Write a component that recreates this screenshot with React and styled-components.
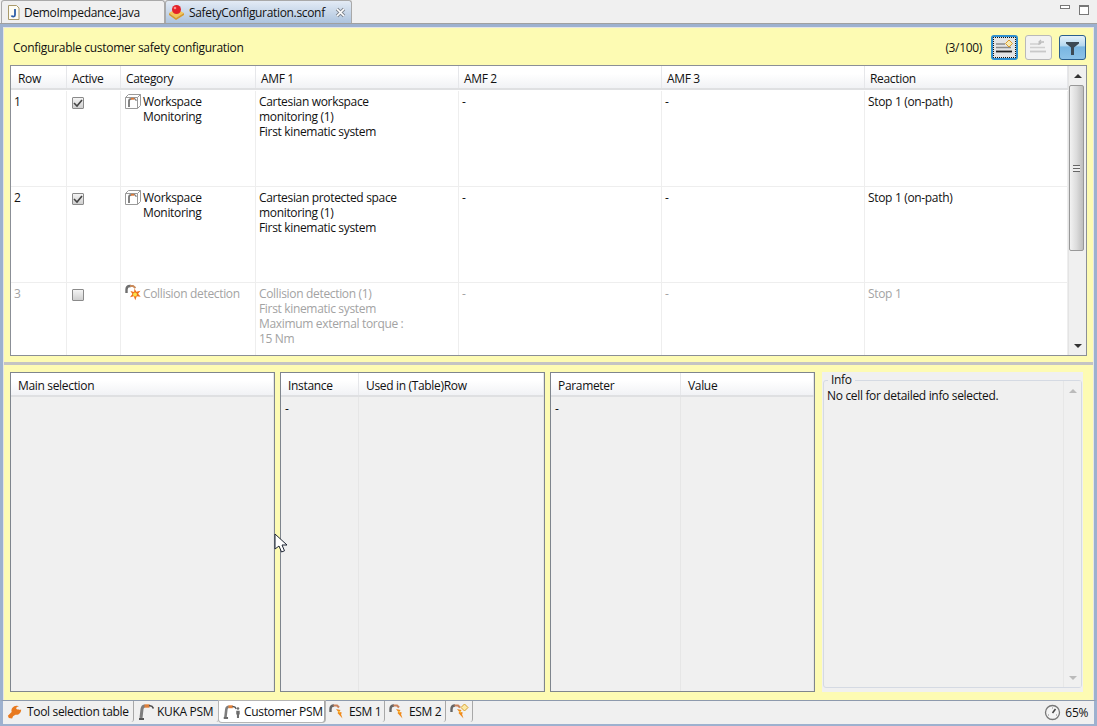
import React from "react";
import styled, { createGlobalStyle } from "styled-components";

const GlobalStyle = createGlobalStyle`
  html, body {
    margin: 0;
    padding: 0;
    background: #f0f0f0;
  }
  * {
    box-sizing: border-box;
  }
`;

const Page = styled.div`
  position: relative;
  width: 1097px;
  height: 726px;
  overflow: hidden;
  display: flex;
  flex-direction: column;
  font-family: "Open Sans", "Noto Sans", sans-serif;
  font-size: 12px;
  letter-spacing: -0.33px;
  color: #111;
  background: #f0f0f0;
`;

const EditorTabs = styled.div`
  height: 24px;
  flex: none;
  display: flex;
  padding-left: 1px;
  background: #f0f0f0;
  border-bottom: 1px solid #a0a0a0;
`;

const EditorTab = styled.div`
  width: ${({ width }) => width}px;
  height: 23px;
  display: flex;
  align-items: center;
  gap: ${({ $active }) => ($active ? 4 : 4)}px;
  padding: 1px 0 0 ${({ $active }) => ($active ? 2 : 5)}px;
  border: 1px solid #a9a9a9;
  border-bottom: none;
  border-radius: 3px 3px 0 0;
  background: ${({ $active }) =>
    $active ? "linear-gradient(#e3ebf5, #aec4de)" : "#f0f0f0"};
  span {
    flex: none;
  }
`;

const CloseMark = styled.svg`
  margin-left: 6px;
  flex: none;
`;

const WindowControls = styled.div`
  margin-left: auto;
  display: flex;
  align-items: flex-start;
  gap: 9px;
  padding: 5px 8px 0 0;
`;

const MinButton = styled.div`
  width: 10px;
  height: 4px;
  border: 1px solid #777;
  background: #fff;
`;

const MaxButton = styled.div`
  width: 10px;
  height: 10px;
  border: 1px solid #777;
  border-top-width: 2px;
  background: #fff;
`;

const Frame = styled.div`
  flex: 1;
  min-height: 0;
  display: flex;
  flex-direction: column;
  border-left: 3px solid #9db1cf;
  border-right: 3px solid #9db1cf;
  border-top: 3px solid #9db1cf;
  background: #fdfbb3;
  box-shadow: inset 1px 0 #e6e6e6, inset -1px 0 #e6e6e6, inset 0 1px #e6e6e6;
`;

const UpperPane = styled.div`
  height: 335px;
  flex: none;
  padding: 0 7px 6px 7px;
  display: flex;
  flex-direction: column;
`;

const HeaderRow = styled.div`
  height: 38px;
  flex: none;
  display: flex;
  align-items: center;
  padding: 2px 1px 0 0;
`;

const HeaderTitle = styled.div`
  padding-left: 3px;
  flex: 1;
  letter-spacing: -0.28px;
`;

const Counter = styled.div`
  margin-right: 2px;
`;

const ToolButton = styled.div`
  width: 27px;
  height: 25px;
  margin-left: 7px;
  display: flex;
  align-items: center;
  justify-content: center;
  border-radius: 3px;
  border: ${({ $kind }) =>
    $kind === "focus"
      ? "2px solid #2f8fd0"
      : $kind === "on"
      ? "1px solid #2b5f8f"
      : "1px solid #b9b9b9"};
  background: ${({ $kind }) =>
    $kind === "on"
      ? "linear-gradient(#e4f1fa 0%, #b5d8ef 42%, #79b6e2 48%, #8cc2e8 100%)"
      : $kind === "focus"
      ? "#e4e4e4"
      : "#f2f2f2"};
  outline: ${({ $kind }) => ($kind === "focus" ? "1px dotted #111" : "none")};
  outline-offset: -3px;
`;

const TableBox = styled.div`
  flex: 1;
  min-height: 0;
  display: flex;
  background: #fff;
  border: 1px solid #8b8f96;
`;

const TableBody = styled.div`
  flex: 1;
  min-width: 0;
  overflow: hidden;
`;

const tableColumns = "56px 54px 135px 203px 203px 203px 203px";

const HeadRow = styled.div`
  display: grid;
  grid-template-columns: ${({ $columns }) => $columns};
  height: 24px;
  flex: none;
  border-bottom: 2px solid #dfe0e2;
  background: linear-gradient(#ffffff, #ffffff 35%, #f1f2f5);
`;

const HeadCell = styled.div`
  padding: 4px 0 0 ${({ $wide }) => ($wide ? 7 : 5)}px;
  border-right: 1px solid #e6e7ea;
  white-space: nowrap;
  overflow: hidden;
`;

const BodyRow = styled.div`
  display: grid;
  grid-template-columns: ${tableColumns};
  height: 96px;
  margin-top: ${({ $first }) => ($first ? 1 : 0)}px;
  border-bottom: 1px solid #eeeeee;
  color: ${({ $muted }) => ($muted ? "#a3a3a3" : "#111")};
`;

const Cell = styled.div`
  padding: 3px 0 0 3px;
  border-right: 1px solid #eeeeee;
  line-height: 15px;
  display: flex;
  gap: 1px;
  align-items: flex-start;
`;

const CheckCell = styled(Cell)`
  padding: 6px 0 0 5px;
`;

const Lines = styled.div`
  display: flex;
  flex-direction: column;
`;

const Check = styled.div`
  width: 12px;
  height: 12px;
  border: 1px solid #8a8a8a;
  border-radius: 1px;
  background: linear-gradient(#f4f4f4, #cfcfcf);
  display: flex;
  align-items: center;
  justify-content: center;
`;

const ScrollTrack = styled.div`
  width: 18px;
  flex: none;
  display: flex;
  flex-direction: column;
  background: #f0f0f0;
  border-left: 1px solid #e4e4e4;
  opacity: ${({ $faint }) => ($faint ? 0.7 : 1)};
`;

const ScrollArrow = styled.div`
  height: 19px;
  flex: none;
  display: flex;
  align-items: center;
  justify-content: center;
  margin-top: ${({ $end }) => ($end ? "auto" : 0)};
  &::before {
    content: "";
    border-left: 4px solid transparent;
    border-right: 4px solid transparent;
    border-${({ $end }) => ($end ? "top" : "bottom")}: 4px solid ${({ $pale }) =>
  $pale ? "#a6a6a6" : "#333"};
  }
`;

const ScrollThumb = styled.div`
  width: 15px;
  height: 166px;
  flex: none;
  display: flex;
  align-items: center;
  justify-content: center;
  border: 1px solid #989898;
  border-radius: 2px;
  background: linear-gradient(90deg, #f2f2f2, #dcdcdc 50%, #bdbdbd);
`;

const Grip = styled.div`
  width: 7px;
  height: 7px;
  background: repeating-linear-gradient(#666 0 1px, #eee 1px 3px);
`;

const Sash = styled.div`
  height: 3px;
  flex: none;
  margin: 0 1px;
  background: #c4c4c4;
`;

const LowerPane = styled.div`
  flex: 1;
  min-height: 0;
  display: flex;
  padding: 7px 11px 8px 7px;
  gap: 5px;
`;

const ListPanel = styled.div`
  width: 265px;
  flex: none;
  display: flex;
  flex-direction: column;
  background: #f0f0f0;
  border: 1px solid #7f858d;
`;

const ListRow = styled.div`
  flex: 1;
  display: grid;
  grid-template-columns: ${({ $columns }) => $columns};
`;

const ListCell = styled.div`
  padding: 4px 0 0 4px;
  line-height: 16px;
  border-right: 1px solid #e6e6e6;
`;

const InfoPanel = styled.div`
  position: relative;
  flex: 1;
  min-width: 0;
  margin-left: 2px;
  display: flex;
  background: #f0f0f0;
`;

const InfoBorder = styled.div`
  flex: 1;
  margin: 8px 1px 4px 1px;
  display: flex;
  border: 1px solid #d5dae3;
  border-radius: 3px;
`;

const InfoLegend = styled.div`
  position: absolute;
  left: 6px;
  top: 0;
  padding: 0 3px;
  background: #f0f0f0;
  line-height: 15px;
`;

const InfoText = styled.div`
  flex: 1;
  padding: 6px 0 0 3px;
`;

const BottomTabs = styled.div`
  height: 26px;
  flex: none;
  display: flex;
  padding: 0 5px 2px 0;
  background: #f0f0f0;
  border-top: 1px solid #8d9aad;
  border-left: 3px solid #9db1cf;
  border-right: 3px solid #9db1cf;
  border-bottom: 2px solid #9db1cf;
`;

const BottomTab = styled.div`
  width: ${({ width }) => width}px;
  height: 21px;
  flex: none;
  display: flex;
  align-items: center;
  gap: ${({ $gap }) => $gap || 3}px;
  padding-left: 3px;
  border-right: 1px solid #a8a8a8;
  background: ${({ $active }) => ($active ? "#fff" : "transparent")};
  border-radius: 0 0 3px 3px;
  ${({ $active }) => ($active ? "box-shadow: 0 0 0 1px #b5b5b5;" : "")}
  white-space: nowrap;
`;

const Zoom = styled.div`
  margin-left: auto;
  display: flex;
  align-items: center;
  gap: 4px;
  height: 22px;
  padding-right: 1px;
`;

const Pointer = styled.svg`
  position: absolute;
  left: 274px;
  top: 533px;
`;

function RobotArm({ person }) {
  return (
    <svg width={person ? 19 : 18} height="17" viewBox={person ? "0 0 22 17" : "0 0 18 17"} style={{ flex: "none" }}>
      <path d="M2 16h5" stroke="#555" strokeWidth="2" />
      <path d="M4 15L5 6C5.300 4 6.500 3 8 3" fill="none" stroke="#7d7d7d" strokeWidth="3" />
      <path d="M7.500 3h5" stroke="#e0803a" strokeWidth="3.400" />
      <path d="M12 2.500l3 .8 1.500 2.200" fill="none" stroke="#4d4d4d" strokeWidth="1.500" />
      {person && (
        <g fill="#6d6d6d">
          <circle cx="18.500" cy="5" r="1.500" />
          <path d="M16.500 7.500h4v4.500h-.8v4h-2.400v-4h-.8z" />
        </g>
      )}
    </svg>
  );
}

function WorkspaceIcon() {
  return (
    <svg width="18" height="17" viewBox="0 0 18 17" style={{ flex: "none", marginTop: -1 }}>
      <path d="M1.500 4.500l3-3h12v11l-3 3h-12z" fill="#fff" stroke="#9a9a9a" />
      <path d="M1.500 4.500h12v11M13.500 4.500l3-3" fill="none" stroke="#9a9a9a" />
      <path d="M5 14V8c0-1.500 1-2.200 2.500-2.200" fill="none" stroke="#777" strokeWidth="1.800" />
      <path d="M7 5.800h3.500" stroke="#d9793a" strokeWidth="1.800" />
      <path d="M10 5.500l2 1v1.500" fill="none" stroke="#666" />
    </svg>
  );
}

function CollisionIcon() {
  return (
    <svg width="18" height="18" viewBox="0 0 18 18" style={{ flex: "none", marginTop: -2 }}>
      <path d="M2.500 9V5.500C2.500 3.500 4 2 6 2h1" fill="none" stroke="#6f6f6f" strokeWidth="2.400" />
      <path d="M6 2h3l2.500 2" fill="none" stroke="#c98a5a" strokeWidth="2" />
      <path d="M10.500 4.500l1.800 3.300 4.200-1-2.400 3 2.600 3-4-.5-1.400 4-1.500-4-3.800 1 2.400-3.300-2-3 3.700 1.100z" fill="#ee6f1a" />
      <circle cx="11" cy="10.500" r="2" fill="#fbe04a" />
    </svg>
  );
}

function FlashArm({ add }) {
  return (
    <svg width={add ? 21 : 16} height="17" viewBox={add ? "0 0 21 17" : "0 0 16 17"} style={{ flex: "none" }}>
      <path d="M2.500 9V6C2.500 4 4 2.500 6 2.500" fill="none" stroke="#666" strokeWidth="2.400" />
      <path d="M5.500 2.500H9l2 2" fill="none" stroke="#c9815a" strokeWidth="2.200" />
      <path d="M8 6l4.500 1-1 1.800 2.500 1-1 1.200 1.500 4.500-5-5.500.8-1z" fill="#f08a1d" />
      <path d="M10 8l2 .5-.5 1.500z" fill="#fbe04a" />
      {add && (
        <path d="M15.500 1l3.500 3.500-3.500 3.500L12 4.500z" fill="#fbeaa8" stroke="#d9a02b" />
      )}
    </svg>
  );
}

function FilterLines({ pale, badge }) {
  return (
    <svg width="19" height="17" viewBox="0 0 19 17">
      <path d="M1 5h9M1 8.500h15" stroke={pale ? "#cfcfcf" : "#8a8a8a"} strokeWidth="1.500" />
      <path d="M1 12.500h16" stroke={pale ? "#c8c8c8" : "#222"} strokeWidth="1.800" />
      {badge === "add" && (
        <path d="M14 1l3.500 3.500L14 8l-3.500-3.500z" fill="#f9eab0" stroke="#d99a2b" />
      )}
      {badge === "undo" && (
        <path d="M10 6c0-2 1-3 3-3h2M12 1l-2 2 2 2" fill="none" stroke="#bdbdbd" strokeWidth="1.300" />
      )}
    </svg>
  );
}

function tableRows() {
  return [
    {
      row: "1",
      checked: true,
      icon: <WorkspaceIcon />,
      category: ["Workspace", "Monitoring"],
      amf: ["Cartesian workspace", "monitoring (1)", "First kinematic system"],
      amf2: "-",
      amf3: "-",
      reaction: "Stop 1 (on-path)",
    },
    {
      row: "2",
      checked: true,
      icon: <WorkspaceIcon />,
      category: ["Workspace", "Monitoring"],
      amf: ["Cartesian protected space", "monitoring (1)", "First kinematic system"],
      amf2: "-",
      amf3: "-",
      reaction: "Stop 1 (on-path)",
    },
    {
      row: "3",
      checked: false,
      muted: true,
      icon: <CollisionIcon />,
      category: ["Collision detection"],
      amf: ["Collision detection (1)", "First kinematic system", "Maximum external torque :", "15 Nm"],
      amf2: "-",
      amf3: "-",
      reaction: "Stop 1",
    },
  ];
}

function ListBox({ columns, heads, first }) {
  return (
    <ListPanel>
      <HeadRow $columns={columns}>
        {heads.map((h) => (
          <HeadCell key={h} $wide>
            {h}
          </HeadCell>
        ))}
      </HeadRow>
      <ListRow $columns={columns}>
        {heads.map((h, i) => (
          <ListCell key={h}>{i === 0 ? first : ""}</ListCell>
        ))}
      </ListRow>
    </ListPanel>
  );
}

export default function App() {
  return (
    <Page>
      <GlobalStyle />
      <EditorTabs>
        <EditorTab width={164}>
          <svg width="13" height="15" viewBox="0 0 13 15" style={{ flex: "none" }}>
            <path d="M1.500.5h8l2.500 2.500v11.500h-10.500z" fill="#fdfcf4" stroke="#a99a6a" />
            <path d="M8 4v6c0 2-3 2-3.500.5" fill="none" stroke="#2d5ea8" strokeWidth="1.800" />
          </svg>
          <span>DemoImpedance.java</span>
        </EditorTab>
        <EditorTab width={187} $active>
          <svg width="17" height="17" viewBox="0 0 17 17" style={{ flex: "none" }}>
            <path d="M1 9l7-4 8 4-8 5z" fill="#f3c65a" />
            <path d="M1 9v2l7 5 8-5V9l-8 5z" fill="#d99a2b" />
            <ellipse cx="8.500" cy="5.500" rx="4.500" ry="4.500" fill="#e3222a" />
            <circle cx="7" cy="4" r="1.300" fill="#ff8d8d" />
          </svg>
          <span>SafetyConfiguration.sconf</span>
          <CloseMark width="11" height="11" viewBox="0 0 11 11">
            <path d="M2 2l7 7M9 2l-7 7" stroke="#7f858e" strokeWidth="3.400" />
            <path d="M2 2l7 7M9 2l-7 7" stroke="#fff" strokeWidth="1.700" />
          </CloseMark>
        </EditorTab>
        <WindowControls>
          <MinButton />
          <MaxButton />
        </WindowControls>
      </EditorTabs>
      <Frame>
        <UpperPane>
          <HeaderRow>
            <HeaderTitle>Configurable customer safety configuration</HeaderTitle>
            <Counter>(3/100)</Counter>
            <ToolButton $kind="focus">
              <FilterLines badge="add" />
            </ToolButton>
            <ToolButton>
              <FilterLines pale badge="undo" />
            </ToolButton>
            <ToolButton $kind="on">
              <svg width="17" height="17" viewBox="0 0 17 17">
                <path d="M2 3h13v1.500l-5 4v7.500h-3V8.500l-5-4z" fill="#3c4a55" />
              </svg>
            </ToolButton>
          </HeaderRow>
          <TableBox>
            <TableBody>
              <HeadRow $columns={tableColumns}>
                <HeadCell $wide>Row</HeadCell>
                <HeadCell>Active</HeadCell>
                <HeadCell>Category</HeadCell>
                <HeadCell>AMF 1</HeadCell>
                <HeadCell>AMF 2</HeadCell>
                <HeadCell>AMF 3</HeadCell>
                <HeadCell>Reaction</HeadCell>
              </HeadRow>
              {tableRows().map((r, i) => (
                <BodyRow key={r.row} $muted={r.muted} $first={i === 0}>
                  <Cell>{r.row}</Cell>
                  <CheckCell>
                    <Check>
                      {r.checked && (
                        <svg width="10" height="10" viewBox="0 0 10 10">
                          <path d="M1 5l3 3 5-6" fill="none" stroke="#444" strokeWidth="1.600" />
                        </svg>
                      )}
                    </Check>
                  </CheckCell>
                  <Cell>
                    {r.icon}
                    <Lines>
                      {r.category.map((t) => (
                        <span key={t}>{t}</span>
                      ))}
                    </Lines>
                  </Cell>
                  <Cell>
                    <Lines>
                      {r.amf.map((t) => (
                        <span key={t}>{t}</span>
                      ))}
                    </Lines>
                  </Cell>
                  <Cell>{r.amf2}</Cell>
                  <Cell>{r.amf3}</Cell>
                  <Cell>{r.reaction}</Cell>
                </BodyRow>
              ))}
            </TableBody>
            <ScrollTrack>
              <ScrollArrow />
              <ScrollThumb>
                <Grip />
              </ScrollThumb>
              <ScrollArrow $end />
            </ScrollTrack>
          </TableBox>
        </UpperPane>
        <Sash />
        <LowerPane>
          <ListBox columns="1fr" heads={["Main selection"]} />
          <ListBox columns="78px 1fr" heads={["Instance", "Used in (Table)Row"]} first="-" />
          <ListBox columns="130px 1fr" heads={["Parameter", "Value"]} first="-" />
          <InfoPanel>
            <InfoBorder>
              <InfoText>No cell for detailed info selected.</InfoText>
              <ScrollTrack $faint>
                <ScrollArrow $pale />
                <ScrollArrow $pale $end />
              </ScrollTrack>
            </InfoBorder>
            <InfoLegend>Info</InfoLegend>
          </InfoPanel>
        </LowerPane>
      </Frame>
      <BottomTabs>
        <BottomTab width={131} $gap={5}>
          <svg width="16" height="17" viewBox="0 0 17 17" style={{ flex: "none" }}>
            <path d="M3 15.500L2 13l4-4C5 5.500 8 2 12 2.500l1.500 1-1 1.500 1 1.500 1.500.5 1-1c.5 3-2 6.500-6 6l-2.500 1.500-1 2.500z" fill="#e8791f" />
            <circle cx="12.500" cy="5" r="1.500" fill="#f0f0f0" />
          </svg>
          Tool selection table
        </BottomTab>
        <BottomTab width={85} $gap={2}>
          <RobotArm />
          KUKA PSM
        </BottomTab>
        <BottomTab width={106} $active>
          <RobotArm person />
          Customer PSM
        </BottomTab>
        <BottomTab width={60} $gap={5}>
          <FlashArm />
          ESM 1
        </BottomTab>
        <BottomTab width={61} $gap={5}>
          <FlashArm />
          ESM 2
        </BottomTab>
        <BottomTab width={27}>
          <FlashArm add />
        </BottomTab>
        <Zoom>
          <svg width="17" height="17" viewBox="0 0 17 17">
            <circle cx="8.500" cy="8.500" r="7" fill="#f4f4f4" stroke="#777" strokeWidth="1.300" />
            <path d="M8.500 9l3-4" stroke="#444" strokeWidth="1.500" />
            <path d="M4 11h1M12 11h1M8 4h1" stroke="#888" />
          </svg>
          65%
        </Zoom>
      </BottomTabs>
      <Pointer width="14" height="21" viewBox="0 0 14 21">
        <path d="M1 1v15l4-3 2.500 6 3-1.200-2.500-5.800h5z" fill="#fff" stroke="#1d2433" strokeWidth="1" />
      </Pointer>
    </Page>
  );
}
